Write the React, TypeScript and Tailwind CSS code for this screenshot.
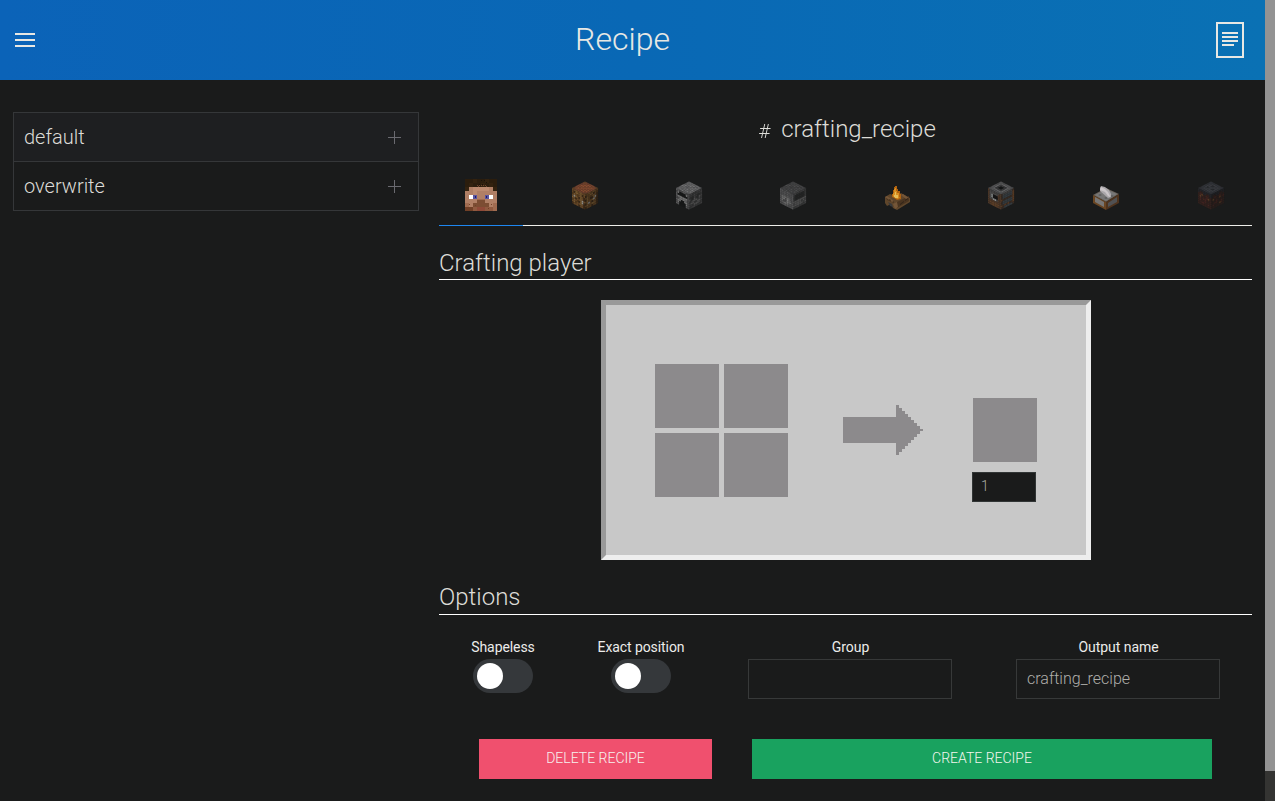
import React from "react";

type Palette = Record<string, string>;

const Texture = ({ rows, palette, transform }: { rows: string[]; palette: Palette; transform: string }) => (
  <g transform={transform}>
    {rows.map((row, y) =>
      row.split("").map((c, x) =>
        palette[c] ? (
          <rect key={`${x}-${y}`} x={x} y={y} width={1.06} height={1.06} fill={palette[c]} />
        ) : null
      )
    )}
  </g>
);

const TOP = "matrix(1.625 0.8125 -1.625 0.8125 16 2.5)";
const LEFT = "matrix(1.625 0.8125 0 1.875 3 9)";
const RIGHT = "matrix(1.625 -0.8125 0 1.875 16 15.5)";

type BlockProps = { top: string[]; left: string[]; right: string[]; palettes: [Palette, Palette, Palette] };

const Block = ({ top, left, right, palettes }: BlockProps) => (
  <svg width="32" height="32" viewBox="0 0 32 32" className="blur-[0.5px]">
    <Texture rows={top} palette={palettes[0]} transform={TOP} />
    <Texture rows={left} palette={palettes[1]} transform={LEFT} />
    <Texture rows={right} palette={palettes[2]} transform={RIGHT} />
  </svg>
);

const faceRows = [
  "aabaabaa",
  "abaababa",
  "bcddddcb",
  "ccdccccc",
  "cwvccvwc",
  "ccceeccc",
  "ecgffgce",
  "ggghhgge",
];
const facePalette: Palette = {
  a: "#2b1d0d", b: "#33220f", c: "#b07f65", d: "#bc8a6f", e: "#a06b50",
  f: "#7c4d33", g: "#905a40", h: "#8f4a38", w: "#ffffff", v: "#5a549f",
};

const PlayerFace = () => (
  <svg width="32" height="32" viewBox="0 0 8 8" shapeRendering="crispEdges">
    {faceRows.map((row, y) =>
      row.split("").map((c, x) => <rect key={`${x}-${y}`} x={x} y={y} width="1" height="1" fill={facePalette[c]} />)
    )}
    <path fill="#1a1109" d="M4 .25h.25v.25H4zM4.75.25H5v.25h-.25zM5.25.75h.25V1h-.25zM3.5 1.25h.25v.25H3.5zM4.25 1.25h.25v.25h-.25z" />
    <path fill="#6d452e" d="M3 1.5h.25v.25H3zM3.5 1.5h.25v.25H3.5zM4 1.5h.25v.25H4zM4.5 1.5h.25v.25H4.5zM5 1.5h.25v.25H5zM3.25 1.75h.25V2h-.25zM5.25 1.75h.25V2h-.25z" />
    <path fill="#1d1a66" d="M2.5 4.25h.25v.5H2.5zM5.25 4.25h.25v.5h-.25z" />
    <path fill="#7c4d33" d="M3 5.25h2V6H3zM2 6h1v1H2zM5 6h1v1H5z" />
    <path fill="#714027" d="M0 7h2v1H0zM1 6.25h.25v.25H1zM2.5 6.5h.25v.25H2.5zM6.5 6.25h.25v.25H6.5zM5.75 7.25H6v.25h-.25z" />
  </svg>
);

const CraftingTable = () => (
  <Block
    top={["kaaaaaak", "abcbbcba", "acbbcbba", "abbcbbca", "acbbbcba", "abcbcbba", "abbcbbca", "kaaaaaak"]}
    left={["mmommomm", "mkoomokm", "nomnmomk", "mwomkomk", "omkmmowm", "nomnkowk", "monmmomk", "kmmmkmmk"]}
    right={["mmommomm", "kmmookmn", "momnmomk", "komkkowk", "mommowmk", "kowmkmmk", "mommoomk", "kmmmkmmk"]}
    palettes={[
      { a: "#74432f", b: "#884d31", c: "#79452d", k: "#5f4226" },
      { m: "#644626", n: "#503719", o: "#77582f", k: "#3b2816", w: "#8d8981" },
      { m: "#4c361d", n: "#3d2a16", o: "#5c4527", k: "#2d2014", w: "#6c6c6b" },
    ]}
  />
);

const stoneTop = ["abcbabca", "bcbbcbab", "abbcbacb", "bcabbcba", "cbbabbcb", "abcbcabb", "bcabbcbc", "abbcabba"];

const Furnace = () => (
  <Block
    top={stoneTop}
    left={["aabbaabb", "bcddddcb", "addddddb", "accccccb", "bbccccab", "accddccb", "bcddddcb", "aaddddab"]}
    right={["aabbbaab", "abbabbba", "bddabddb", "cddcddca", "bbcccbab", "accbbcca", "abbcccab", "bbaabbba"]}
    palettes={[
      { a: "#5c5c5e", b: "#676768", c: "#727273" },
      { a: "#565657", b: "#454546", c: "#707070", d: "#171818" },
      { a: "#3b3b3c", b: "#323333", c: "#4a4a4a", d: "#292a2a" },
    ]}
  />
);

const BlastFurnace = () => (
  <Block
    top={stoneTop}
    left={["aabbaabb", "abababba", "bbabaaba", "acccccba", "bcedecab", "acddecca", "aacccaba", "bbaaabba"]}
    right={["aabbbaab", "addddddb", "bddddddb", "addddddb", "cccccccc", "accccbca", "ccccccbc", "bbaabbba"]}
    palettes={[
      { a: "#3f3f40", b: "#454546", c: "#4c4c4d" },
      { a: "#525253", b: "#4a4a4b", c: "#656565", d: "#444445", e: "#767676" },
      { a: "#3b3b3c", b: "#343535", c: "#4b4b4b", d: "#242525" },
    ]}
  />
);

const Smoker = () => (
  <Block
    top={["aaaaaaaa", "abbbbbba", "abeeeeba", "abeffeba", "abeffeba", "abeeeeba", "abbbbbba", "aaaaaaaa"]}
    left={["kaaaaaak", "kccccckk", "kcwdddkk", "kcwdddkk", "kccwwckk", "kkkkkkkk", "kmmmmmmk", "kkmmmmkk"]}
    right={["kaaaaaak", "kccccccm", "kccccccm", "mkkkkkkm", "kccccccm", "kccccccm", "mkmkmkkm", "kkccccck"]}
    palettes={[
      { a: "#525253", b: "#616162", e: "#3a3a3b", f: "#151616" },
      { a: "#424141", c: "#4a4948", d: "#151515", k: "#4c3728", m: "#5b3e27", w: "#858888" },
      { a: "#3d3c3c", c: "#343a3e", k: "#362a22", m: "#563923" },
    ]}
  />
);

const Campfire = () => (
  <svg width="32" height="32" viewBox="0 0 32 32" className="blur-[0.5px]">
    <path fill="#5f462b" d="m4 18 5-3 5 2 6-3 9 5v4l-13 8-4-2-2-4-4 2-2-3z" />
    <path fill="#493420" d="m5 18 8 4v2l-7-3zM16 23l12-6v5l-12 7z" />
    <path fill="#745638" d="m4 18 2-1 7 5-2 1zM12 25l4-2 1 5-3 2zM20 16l2-1 6 4-3 1z" />
    <path fill="#383a3c" d="m7 23 4 2 1 3-3-1z" />
    <path fill="#302318" d="m8 20 2 1-1 1zM19 25l4-3v1l-4 3zM24 21l3-2v1l-3 2z" />
    <path fill="#b0620f" d="M11 18v-3h1v-4h1V8h1V7h2v3h1v2h2v3h1v5l-4 1-3-2z" />
    <path fill="#d88e22" d="M12 17v-3h1v-4h1V9h1v3h1v2h2v4h1l-2 2-3-1z" />
    <path fill="#e8bd58" d="M14 13h1v3h2v3h-3v-1h-1v-2h1z" />
  </svg>
);

const Stonecutter = () => (
  <svg width="32" height="32" viewBox="0 0 32 32" className="blur-[0.5px]">
    <path fill="#69625a" d="m3 16 13-7 13 6-13 8z" />
    <path fill="#777777" d="m5 16 11-6 11 5-11 7z" />
    <path fill="#5c5c5d" d="m8 16 2-1 2 1-2 1zM14 19l2-1 2 1-2 1zM20 17l2-1 2 1-2 1z" />
    <path fill="#694522" d="m3 16 13 7v8L3 24z" />
    <path fill="#4e331d" d="m29 15-13 8v8l13-7z" />
    <path fill="#777675" d="m5 18 9 5v5l-9-5z" />
    <path fill="#505153" d="m18 24 9-6v5l-9 5z" />
    <path fill="#aaa7aa" d="M10 12V9l1-2 4 1 4 3 2 4v3l-3 1z" />
    <path fill="#cbc6c9" d="m11 8 4 2 3 3 2 4v1l-2-1-3-4-5-2z" />
  </svg>
);

const SmithingTable = () => (
  <Block
    top={["aaaaaaaa", "abbbbbba", "abbcbbba", "abbbbbba", "abcbbcba", "abbbbbba", "abbbbbba", "aaaaaaaa"]}
    left={["dddddddd", "dkkddkkd", "kmokkmkk", "kokkkmok", "kmkmmkkk", "kmkkmkkk", "kkmmkkmk", "kkkkkkkk"]}
    right={["dddddddd", "dkkddkkd", "kkmkkmkk", "kokkkokm", "kkkmkkkk", "kkmmkkmk", "kmkkkomk", "kkkkkkkk"]}
    palettes={[
      { a: "#303237", b: "#383a3f", c: "#26282c" },
      { d: "#232428", k: "#31201d", m: "#412320", o: "#543924" },
      { d: "#1e1f22", k: "#261c1a", m: "#341e1b", o: "#46311f" },
    ]}
  />
);

const tabs = [
  { Icon: PlayerFace, nudge: "" },
  { Icon: CraftingTable, nudge: "" },
  { Icon: Furnace, nudge: "" },
  { Icon: BlastFurnace, nudge: "" },
  { Icon: Campfire, nudge: "pr-px" },
  { Icon: Smoker, nudge: "pr-px" },
  { Icon: Stonecutter, nudge: "" },
  { Icon: SmithingTable, nudge: "pl-0.5" },
];

const Plus = () => (
  <svg width="13" height="13" viewBox="0 0 13 13" fill="#6a6a70" shapeRendering="crispEdges">
    <rect y="6" width="13" height="1" />
    <rect x="6" width="1" height="13" />
  </svg>
);

const Hashtag = () => (
  <svg width="20" height="20" viewBox="0 0 20 20" fill="#dededa">
    <path fillRule="evenodd" d="M15.431,8 L15.661,7 L12.911,7 L13.831,3 L12.901,3 L11.98,7 L9.29,7 L10.21,3 L9.281,3 L8.361,7 L5.23,7 L5,8 L8.13,8 L7.21,12 L4.23,12 L4,13 L6.98,13 L6.061,17 L6.991,17 L7.911,13 L10.601,13 L9.681,17 L10.611,17 L11.531,13 L14.431,13 L14.661,12 L11.76,12 L12.681,8 Z M10.831,12 L8.141,12 L9.061,8 L11.75,8 Z" />
  </svg>
);

const Arrow = () => (
  <svg width="80" height="50" viewBox="0 0 80 50" fill="#8c8a8c" shapeRendering="crispEdges">
    <rect y="12" width="53" height="26" />
    {[0, 1, 2, 3, 4, 5, 6, 7, 8].map((i) => (
      <rect key={i} x={53 + i * 3} y={i * 3} width="3" height={50 - i * 6} />
    ))}
  </svg>
);

const Slot = () => <div className="size-16 bg-[#8c8a8c]" />;

const Toggle = ({ label, className }: { label: string; className: string }) => (
  <div className={`flex flex-col items-center ${className}`}>
    <span className="h-[21px] text-sm leading-[21px] tracking-[-0.08px] whitespace-nowrap text-[#ececea]">{label}</span>
    <button className="mt-px flex h-[34px] w-[60px] items-center rounded-full bg-[#35383b] px-1">
      <span className="size-[26px] rounded-full bg-white" />
    </button>
  </div>
);

const Field = ({ label, value }: { label: string; value: string }) => (
  <div className="flex w-[204px] flex-col items-center">
    <span className="h-[21px] pl-px text-sm leading-[21px] tracking-[-0.04px] text-[#ececea]">{label}</span>
    <input
      defaultValue={value}
      className="mt-px h-10 w-full border border-[#373939] bg-transparent px-2.5 pb-0.5 text-base font-light text-[#b0afab] outline-none"
    />
  </div>
);

export default function App() {
  return (
    <div className="flex h-[801px] w-[1275px] overflow-hidden bg-[#1a1b1b] font-['Roboto',sans-serif] font-light text-[#dddcd7]">
      <div className="flex w-[1265px] flex-col">
        <header className="flex h-20 items-center justify-between bg-linear-to-r from-[#0b63b8] via-[#0968b5] to-[#0a71b4] pr-[21px] pl-[15px]">
          <button className="flex w-7 flex-col gap-1">
            <span className="h-0.5 w-5 bg-[#e8e8e4]" />
            <span className="h-0.5 w-5 bg-[#e8e8e4]" />
            <span className="h-0.5 w-5 bg-[#e8e8e4]" />
          </button>
          <h1 className="pr-3.5 pb-0.5 text-[32px] leading-10 text-[#e8e8e4]">Recipe</h1>
          <button className="flex h-9 w-7 flex-col gap-0.5 border-2 border-[#e8e8e4] px-1 pt-2">
            <span className="h-0.5 w-4 bg-[#e8e8e4]" />
            <span className="h-0.5 w-4 bg-[#e8e8e4]" />
            <span className="h-0.5 w-4 bg-[#e8e8e4]" />
            <span className="h-0.5 w-3 bg-[#e8e8e4]" />
          </button>
        </header>

        <div className="flex flex-1 gap-5 px-[13px] pt-8">
          <aside className="w-[406px] text-xl">
            <div className="flex h-[50px] items-center justify-between border border-[#353739] bg-[#1e1f21] pr-[17px] pl-2.5">
              default
              <Plus />
            </div>
            <div className="-mt-px flex h-[50px] items-center justify-between border border-[#353739] pr-[17px] pl-2.5">
              overwrite
              <Plus />
            </div>
          </aside>

          <main className="flex w-[813px] flex-col">
            <div className="flex h-[34px] items-center justify-center gap-1.5 text-2xl">
              <span className="pt-1"><Hashtag /></span>
              <span>crafting_recipe</span>
            </div>

            <nav className="mt-[19px] grid h-[61px] grid-cols-8 gap-5">
              {tabs.map(({ Icon, nudge }, i) => (
                <button key={i} className={`flex justify-center pt-3.5 ${nudge}`}>
                  <Icon />
                </button>
              ))}
            </nav>
            <div className="-mt-px flex h-px bg-[#eeeeea]">
              <span className="h-px w-[84px] bg-[#1e87f0]" />
            </div>

            <h2 className="mt-[21px] h-[33px] border-b border-white text-2xl leading-8">Crafting player</h2>

            <section className="mt-5 ml-[162px] flex h-[260px] w-[490px] border-5 border-t-[#999] border-r-[#eee] border-b-[#eee] border-l-[#999] bg-[#c8c8c8]">
              <div className="mt-[59px] ml-[49px] grid h-fit grid-cols-2 gap-[5px]">
                <Slot />
                <Slot />
                <Slot />
                <Slot />
              </div>
              <div className="mt-[100px] ml-[55px]">
                <Arrow />
              </div>
              <div className="mt-[93px] ml-[49px] w-[65px]">
                <div className="pl-px">
                  <Slot />
                </div>
                <input
                  defaultValue="1"
                  className="mt-2.5 block h-[30px] w-16 border border-[#313535] bg-[#1a1b1b] px-2 pb-0.5 text-sm text-[#aaa9a5] outline-none"
                />
              </div>
            </section>

            <h2 className="mt-[21px] h-[34px] border-b border-white text-2xl leading-8">Options</h2>

            <div className="mt-[22px] flex pl-8 font-normal">
              <Toggle label="Shapeless" className="w-16" />
              <Toggle label="Exact position" className="ml-[62px] w-[88px]" />
              <div className="ml-[63px] flex gap-16">
                <Field label="Group" value="" />
                <Field label="Output name" value="crafting_recipe" />
              </div>
            </div>

            <div className="mt-10 flex gap-10 pl-10 text-sm">
              <button className="h-10 w-[233px] bg-[#f0506e] pb-0.5 text-[#f6f2ee]">DELETE RECIPE</button>
              <button className="h-10 w-[460px] bg-[#19a25f] pb-0.5 text-[#f2f6ee]">CREATE RECIPE</button>
            </div>
          </main>
        </div>
      </div>
      <div className="w-2.5 bg-[#343432]">
        <div className="h-[771px] bg-[#939393]" />
      </div>
    </div>
  );
}
